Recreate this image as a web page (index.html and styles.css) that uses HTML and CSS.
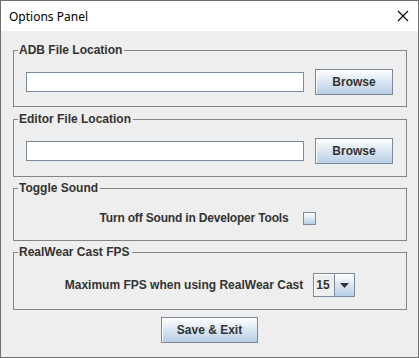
FILE: index.html
```html
<!DOCTYPE html>
<html lang="en">
<head>
  <meta charset="UTF-8" />
  <title>Options Panel</title>
  <link rel="stylesheet" href="styles.css">
</head>
<body>
  <div class="window">
    <div class="titlebar">
      <span class="title">Options Panel</span>
      <svg class="close" width="12" height="12" viewBox="0 0 12 12">
        <path d="M1 1 L11 11 M11 1 L1 11" stroke="#000" stroke-width="1.1" fill="none" />
      </svg>
    </div>

    <div class="content">
      <fieldset class="group first">
        <legend>ADB File Location</legend>
        <div class="file-row">
          <input type="text" class="field" />
          <button class="btn browse">Browse</button>
        </div>
      </fieldset>

      <fieldset class="group second">
        <legend>Editor File Location</legend>
        <div class="file-row">
          <input type="text" class="field" />
          <button class="btn browse">Browse</button>
        </div>
      </fieldset>

      <fieldset class="group">
        <legend>Toggle Sound</legend>
        <div class="center-row sound-row">
          <span class="label sound-label">Turn off Sound in Developer Tools</span>
          <span class="checkbox"></span>
        </div>
      </fieldset>

      <fieldset class="group">
        <legend>RealWear Cast FPS</legend>
        <div class="center-row fps-row">
          <span class="label">Maximum FPS when using RealWear Cast</span>
          <div class="combo">
            <span class="combo-value">15</span>
            <span class="combo-arrow">
              <svg width="9" height="5" viewBox="0 0 9 5"><path d="M0 0 H9 L4.5 5 Z" fill="#333" /></svg>
            </span>
          </div>
        </div>
      </fieldset>

      <div class="footer">
        <button class="btn save">Save &amp; Exit</button>
      </div>
    </div>
  </div>
</body>
</html>
```

FILE: styles.css
```css
* {
  box-sizing: border-box;
}
body {
  margin: 0;
  background: #ffffff;
  font-family: "Liberation Sans", Arial, sans-serif;
}
.window {
  width: 419px;
  height: 358px;
  border: 1px solid #6f6f6f;
  display: flex;
  flex-direction: column;
}
.titlebar {
  height: 30px;
  background: #ffffff;
  display: flex;
  align-items: center;
  justify-content: space-between;
  padding: 0 9px 0 8px;
}
.title {
  font-family: "Noto Sans", sans-serif;
  font-size: 12px;
  color: #000;
}
.close {
  display: block;
}
.content {
  flex: 1;
  background: #eeeeee;
  padding: 12px 11px 0 12px;
}
.group {
  margin: 0 0 4px 0;
  border: 1px solid #858585;
  padding: 12px 12px 11px 12px;
  min-width: 0;
}
.group.first {
  margin-bottom: 5px;
}
.group.second {
  padding-bottom: 12px;
}
.group legend {
  font-size: 12px;
  font-weight: bold;
  line-height: 14px;
  color: #333333;
  padding: 0 2px 0 1px;
  margin-left: -8px;
}
.file-row {
  display: flex;
  align-items: center;
  gap: 11px;
}
.field {
  width: 278px;
  height: 20px;
  border: 1px solid #7a8a99;
  background: #ffffff;
  margin: 0;
  padding: 0 3px;
}
.btn {
  height: 26px;
  border: 1px solid #7a8a99;
  background: linear-gradient(#ffffff, #dde8f3 45%, #b8cfe5);
  box-shadow: inset 1px 1px 0 #ffffff;
  font-family: "Liberation Sans", Arial, sans-serif;
  font-size: 12px;
  font-weight: bold;
  color: #333333;
  padding: 0;
  margin: 0;
}
.browse {
  width: 78px;
}
.center-row {
  display: flex;
  justify-content: center;
  align-items: center;
  height: 22px;
}
.label {
  font-size: 12px;
  font-weight: bold;
  color: #333333;
}
.sound-row {
  gap: 15px;
  padding-right: 4px;
}
.sound-label {
  letter-spacing: -0.18px;
}
.checkbox {
  width: 13px;
  height: 13px;
  border: 1px solid #7a8a99;
  background: linear-gradient(#ffffff, #b8cfe5);
}
.fps-row {
  gap: 10px;
  height: 24px;
  margin: 2px 0 1px 0;
}
.combo {
  display: flex;
  height: 24px;
  border: 1px solid #7a8a99;
}
.combo-value {
  width: 21px;
  border-right: 1px solid #7a8a99;
  background: #eeeeee;
  font-size: 12px;
  font-weight: bold;
  color: #333333;
  display: flex;
  align-items: center;
  padding-left: 2px;
  box-shadow: inset 1px 1px 0 #ffffff;
}
.combo-arrow {
  width: 19px;
  display: flex;
  align-items: center;
  justify-content: center;
  background: linear-gradient(#ffffff, #dde8f3 45%, #b8cfe5);
}
.footer {
  display: flex;
  justify-content: center;
  padding-top: 3px;
  padding-right: 1px;
}
.save {
  width: 97px;
}
```
